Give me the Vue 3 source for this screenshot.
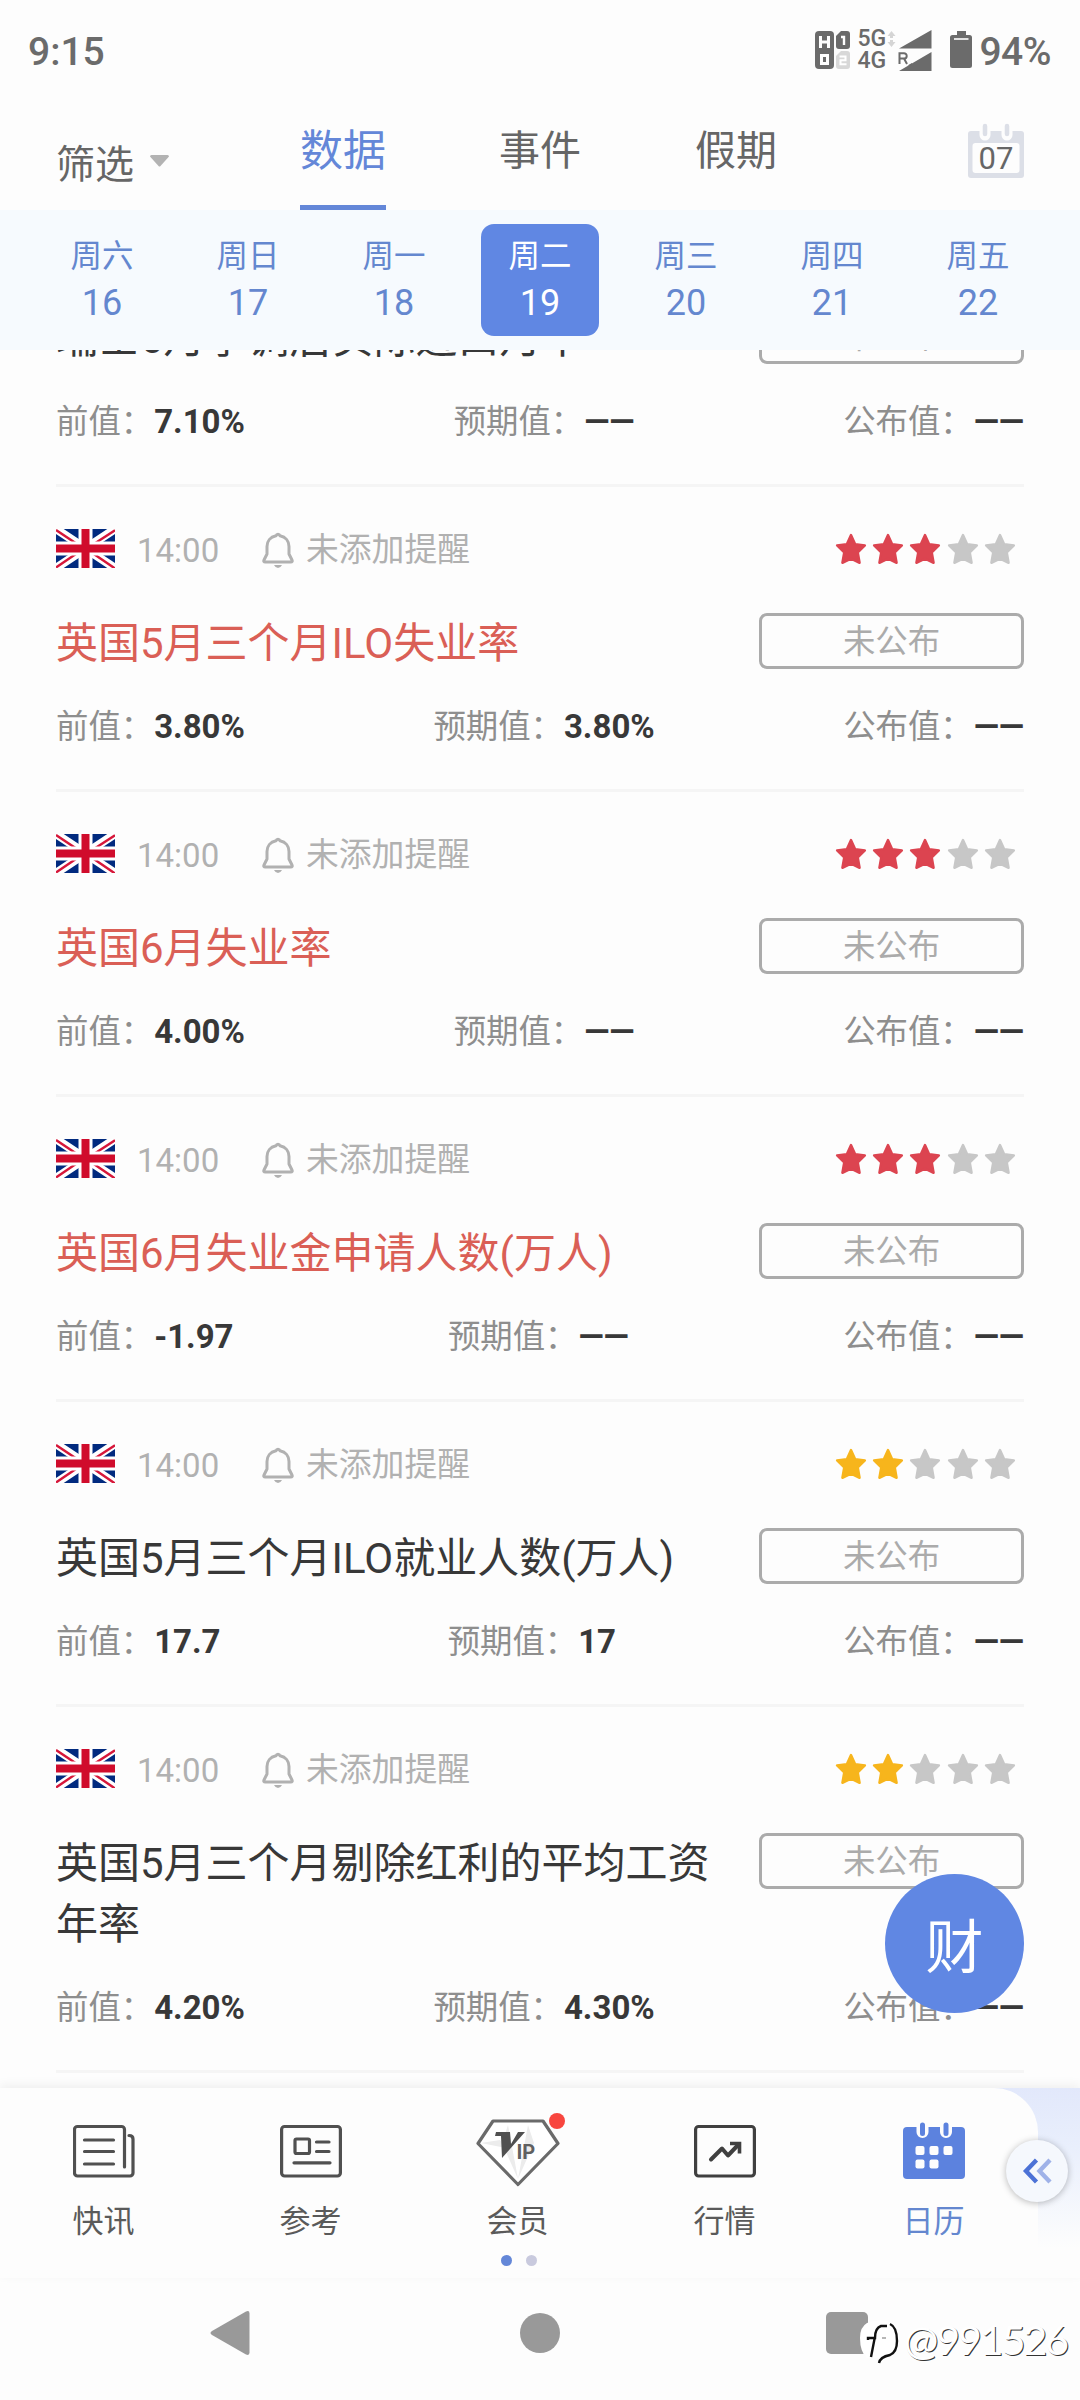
<script setup>
const tabs = ['数据', '事件', '假期']

const days = [
  { name: '周六', date: 16 },
  { name: '周日', date: 17 },
  { name: '周一', date: 18 },
  { name: '周二', date: 19, active: true },
  { name: '周三', date: 20 },
  { name: '周四', date: 21 },
  { name: '周五', date: 22 },
]

const EMPTY = '——'

const items = [
  { title: '瑞士6月季调后实际进口月率', stars: 2, prev: '7.10%', forecast: EMPTY, actual: EMPTY },
  { title: '英国5月三个月ILO失业率', stars: 3, prev: '3.80%', forecast: '3.80%', actual: EMPTY },
  { title: '英国6月失业率', stars: 3, prev: '4.00%', forecast: EMPTY, actual: EMPTY },
  { title: '英国6月失业金申请人数(万人)', stars: 3, prev: '-1.97', forecast: EMPTY, actual: EMPTY },
  { title: '英国5月三个月ILO就业人数(万人)', stars: 2, prev: '17.7', forecast: '17', actual: EMPTY },
  { title: '英国5月三个月剔除红利的平均工资年率', stars: 2, prev: '4.20%', forecast: '4.30%', actual: EMPTY },
]
</script>

<template>
  <div class="screen">
    <header class="status">
      <span class="clock">9:15</span>
      <div class="indicators">
        <svg class="sim" width="36" height="38" viewBox="0 0 36 38">
          <rect x="0" y="0" width="19" height="38" rx="4" fill="#6b6b6b" />
          <path d="M5.500 5v12M13.500 5v12M5.500 11h8" stroke="#fff" stroke-width="3" fill="none" />
          <path d="M6.500 24.500h6v8h-6z" stroke="#fff" stroke-width="3" fill="none" />
          <path d="M26 0h6a3 3 0 0 1 3 3v12a3 3 0 0 1-3 3h-8a3 3 0 0 1-3-3V5z" fill="#6b6b6b" />
          <path d="M26 6h3v8" stroke="#fff" stroke-width="2.400" fill="none" />
          <path d="M26 20h6a3 3 0 0 1 3 3v12a3 3 0 0 1-3 3h-8a3 3 0 0 1-3-3V25z" fill="#d8d8d8" />
          <path d="M24.500 25.500h6v3.700h-5v4h6" stroke="#fff" stroke-width="2" fill="none" />
        </svg>
        <div class="nets"><span>5G</span><span>4G</span></div>
        <svg class="signal" width="45" height="42" viewBox="0 0 45 42">
          <path d="M4.500 2l4 5h-2.500v2h-3V7H.5zM4.500 18l4-5h-2.500v-2h-3v2H.5z" fill="#d5d5d5" />
          <path d="M12 19.500L44.500 1v18.500zM12 42L44.500 23v19z" fill="#6b6b6b" />
          <rect x="10" y="22.500" width="12" height="13" fill="#fdfdfd" />
          <path d="M12.500 35V24.200h4.500a2.600 2.600 0 0 1 0 5.400h-4.500M17 29.600l3 5.400" fill="none" stroke="#6b6b6b" stroke-width="2" />
          <path d="M20.500 36.500L25 34v2.500z" fill="#6b6b6b" />
        </svg>
        <svg class="battery" width="22" height="37" viewBox="0 0 22 37">
          <path d="M7 0h9v4h3.500A2.500 2.500 0 0 1 22 6.500v28a2.500 2.500 0 0 1-2.500 2.500h-17A2.500 2.500 0 0 1 0 34.500v-28A2.500 2.500 0 0 1 2.500 4H7z" fill="#6b6b6b" />
          <path d="M4 8h14.500" stroke="#fff" stroke-width="1.600" />
        </svg>
        <span class="level">94%</span>
      </div>
    </header>

    <nav class="top">
      <div class="filter">
        <span>筛选</span>
        <svg width="19" height="12" viewBox="0 0 19 12"><path d="M0 1.500Q0 0 1.500 0h16Q19 0 19 1.500L10.500 11q-1 1-2 0z" fill="#b3b3b3" /></svg>
      </div>
      <div class="tabs">
        <span v-for="(t, i) in tabs" :key="t" class="tab" :class="{ on: i === 0 }">{{ t }}</span>
      </div>
      <div class="today">
        <svg width="56" height="55" viewBox="0 0 56 55">
          <path d="M3 8h50a3 3 0 0 1 3 3v41a3 3 0 0 1-3 3H3a3 3 0 0 1-3-3V11a3 3 0 0 1 3-3z" fill="#dcdfe7" />
          <rect x="4.500" y="20" width="47" height="30" rx="3" fill="#fdfdfd" />
          <path d="M17 6v6M39 6v6" stroke="#fdfdfd" stroke-width="11" stroke-linecap="round" />
          <path d="M17 3v8M39 3v8" stroke="#dcdfe7" stroke-width="4.500" stroke-linecap="round" />
        </svg>
        <span>07</span>
      </div>
    </nav>

    <section class="week">
      <div v-for="d in days" :key="d.date" class="day" :class="{ active: d.active }">
        <span class="name">{{ d.name }}</span>
        <span class="date">{{ d.date }}</span>
      </div>
    </section>

    <main class="list">
      <article v-for="it in items" :key="it.title" class="item">
        <div class="head">
          <svg class="flag" width="59" height="39" viewBox="0 0 59 39">
            <rect width="59" height="39" fill="#012a7f" />
            <path d="M0 0L59 39M59 0L0 39" stroke="#fff" stroke-width="8.500" />
            <path d="M0 1L27 19M32 21L59 39.500M59 1.200L34 17.500M25 21.500L0 38.500" stroke="#d6173a" stroke-width="2.400" />
            <path d="M29.500 0v39M0 19.500h59" stroke="#fff" stroke-width="14" />
            <path d="M29.500 0v39M0 19.500h59" stroke="#d00c2c" stroke-width="8" />
          </svg>
          <span class="time">14:00</span>
          <svg class="bell" width="32" height="36" viewBox="0 0 32 36" fill="none" stroke="#b1b1b1" stroke-width="3">
            <path d="M16 2.200c-1.200 0-1.700.7-2 1.600C8.200 5 5 9.300 5 14.500V22L2 28q-.8 2 1.200 2h25.600q2 0 1.200-2L27 22v-7.500C27 9.300 23.800 5 18 3.800c-.3-.9-.8-1.600-2-1.600z" stroke-linejoin="round" />
            <path d="M12 33h8q-1.500 3-4 3t-4-3z" fill="#b1b1b1" stroke="none" />
          </svg>
          <span class="remind">未添加提醒</span>
          <div class="stars">
            <svg v-for="n in 5" :key="n" width="32" height="32" viewBox="0 0 32 32">
              <path
                d="M16 2L20.200 11.200L29.900 12.400L22.800 19.400L24.600 29.800L16 25.600L7.400 29.800L9.200 19.400L2.100 12.400L11.800 11.200Z"
                :class="n > it.stars ? 's-off' : it.stars > 2 ? 's-red' : 's-gold'"
                stroke-width="2.400" stroke-linejoin="round"
              />
            </svg>
          </div>
        </div>
        <div class="main-row">
          <h3 :class="{ hot: it.stars > 2 }">{{ it.title }}</h3>
          <span class="badge">未公布</span>
        </div>
        <div class="values">
          <span>前值：<b>{{ it.prev }}</b></span>
          <span>预期值：<b>{{ it.forecast }}</b></span>
          <span>公布值：<b>{{ it.actual }}</b></span>
        </div>
      </article>
    </main>

    <button class="fab">财</button>

    <footer class="bottom">
      <div class="bar">
        <div class="entry">
          <svg width="62" height="70" viewBox="0 0 62 70" fill="none" stroke="#505050" stroke-width="3.200" stroke-linecap="round">
            <path d="M51.500 50V12.500a3 3 0 0 0-3-3H4.500a3 3 0 0 0-3 3V56a3 3 0 0 0 3 3H57a3 3 0 0 0 3-3V22q0-3.500-4-3.500" />
            <path d="M11.500 23h29M11.500 34.500h29M11.500 47h29" />
          </svg>
          <span>快讯</span>
        </div>
        <div class="entry">
          <svg width="62" height="70" viewBox="0 0 62 70" fill="none" stroke="#505050" stroke-width="3.200" stroke-linecap="round">
            <rect x="1.600" y="9.500" width="58.800" height="49.500" rx="3" />
            <rect x="15" y="22" width="14.500" height="14.500" rx="1.500" />
            <path d="M36.500 25h12.500M36.500 34.500h12.500M14 45.800h36" />
          </svg>
          <span>参考</span>
        </div>
        <div class="entry">
          <svg class="vip" width="84" height="70" viewBox="0 0 84 70">
            <path d="M17 4h50L82 26.500L42 67.500L2 26.500z" fill="#fff" />
            <path d="M26 26L32 8L42 62zM58 26L52 8L42 62zM5 26L24 23L30 31z" fill="#ececec" />
            <path d="M17 4h50L82 26.500L42 67.500L2 26.500z" fill="none" stroke="#6a6a6a" stroke-width="3.200" stroke-linejoin="round" />
            <path d="M20 15h14l1 12L42 15h7L26 41L25 19h-6z" fill="#505050" />
            <text x="40.500" y="42" class="ip">IP</text>
          </svg>
          <i class="dot" />
          <span>会员</span>
        </div>
        <div class="entry">
          <svg width="62" height="70" viewBox="0 0 62 70" fill="none" stroke="#404040">
            <rect x="1.600" y="9.500" width="58.800" height="49.500" rx="3" stroke-width="3.200" />
            <path d="M17 42.500L28 31.500L34 38.500L45 27" stroke-width="4" stroke-linecap="round" stroke-linejoin="round" />
            <path d="M36 26.500h9.500v10" stroke-width="3.600" />
          </svg>
          <span>行情</span>
        </div>
        <div class="entry current">
          <svg width="62" height="70" viewBox="0 0 62 70">
            <rect x="0" y="10" width="62" height="52" rx="4" fill="#5c82de" />
            <path d="M19.500 8v7M43 8v7" stroke="#fdfdfd" stroke-width="12" stroke-linecap="round" />
            <path d="M19.500 8v8.500M43 8v8.500" stroke="#5c82de" stroke-width="5" stroke-linecap="round" />
            <g fill="#fdfdfd">
              <rect x="12.500" y="29" width="9" height="9" rx="2" /><rect x="26.500" y="29" width="9" height="9" rx="2" /><rect x="40.500" y="29" width="9" height="9" rx="2" />
              <rect x="12.500" y="42.500" width="9" height="9" rx="2" /><rect x="26.500" y="42.500" width="9" height="9" rx="2" />
            </g>
          </svg>
          <span>日历</span>
        </div>
      </div>
      <div class="expand">
        <svg width="30" height="26" viewBox="0 0 30 26" fill="none" stroke-width="4.400">
          <path d="M14.500 2L4 13l10.500 11" stroke="#4c72d6" />
          <path d="M28 2L17.500 13L28 24" stroke="#9fb2e8" />
        </svg>
      </div>
      <div class="pager"><i /><i /></div>
    </footer>

    <div class="system">
      <svg width="40" height="46" viewBox="0 0 40 46"><path d="M36 1.500L2 21q-3 2 0 4L36 44.500q3.500 1.500 3.500-2V3.500Q39.500 0 36 1.500z" fill="#999" /></svg>
      <i class="home" />
      <i class="recent" />
    </div>

    <div class="watermark">
      <svg width="42" height="48" viewBox="0 0 42 48">
        <path d="M8 5Q18 1 28 3Q40 6 40 22Q40 33 32 38L21 45L22 40H8Q1 34 1 20Q1 9 8 5z" fill="#fff" />
        <path d="M31 6q7 3 7 17q0 11-7 14q-10 2-11 8" fill="none" stroke="#111" stroke-width="2.400" />
        <path d="M12 39l3.500-18M9 22V20h7q0-10 6-12h6" fill="none" stroke="#111" stroke-width="2.400" />
        <path d="M23 20h4" stroke="#999" stroke-width="1.400" />
      </svg>
      <span>@991526</span>
    </div>
  </div>
</template>

<style>
body {
  margin: 0;
  background: #fdfdfd;
}
</style>

<style scoped>
.screen {
  position: relative;
  width: 1080px;
  height: 2400px;
  overflow: hidden;
  display: flex;
  flex-direction: column;
  background: #fdfdfd;
  font-family: Roboto, 'Noto Sans CJK SC', sans-serif;
  color: #666;
}
.status {
  height: 102px;
  box-sizing: border-box;
  padding: 0 29px 0 28px;
  display: flex;
  justify-content: space-between;
  align-items: center;
  color: #6b6b6b;
  font-size: 39px;
}
.clock { font-weight: 500; margin-top: 2px; }
.indicators { display: flex; align-items: center; height: 42px; margin-top: -3px; }
.nets {
  display: flex;
  flex-direction: column;
  width: 30px;
  margin-left: 6px;
  font-size: 23px;
  line-height: 22px;
  font-weight: 500;
}
.battery { margin-left: 18px; }
.level { margin-left: 7px; margin-top: 5px; font-weight: 500; letter-spacing: -0.500px; }
.top {
  height: 108px;
  display: flex;
  position: relative;
  box-sizing: border-box;
  padding: 0 56px;
}
.filter {
  display: flex;
  align-items: center;
  gap: 16px;
  font-size: 39px;
  width: 244px;
  height: 60px;
  margin-top: 29px;
}
.tabs { display: flex; align-items: flex-start; }
.tab {
  font-size: 41px;
  line-height: 60px;
  margin-top: 19px;
  width: 196px;
  height: 89px;
}
.tab.on {
  width: 86px;
  font-size: 43px;
  line-height: 61px;
  color: #6487d8;
  border-bottom: 5px solid #6487d8;
  height: 84px;
  margin-right: 113px;
}
.today {
  position: relative;
  width: 56px;
  height: 55px;
  margin: 21px 0 0 auto;
}
.today svg { display: block; }
.today span {
  position: absolute;
  inset: 17px 0 0 0;
  text-align: center;
  font-size: 31px;
  line-height: 38px;
}
.week {
  height: 140px;
  flex: none;
  background: #f6fafe;
  display: flex;
  justify-content: space-between;
  align-items: center;
  padding: 0 43px;
}
.day {
  width: 118px;
  height: 112px;
  border-radius: 13px;
  display: flex;
  flex-direction: column;
  align-items: center;
  color: #6487cf;
}
.day.active { background: #6087e3; color: #fff; }
.name { font-size: 31.500px; line-height: 46px; margin-top: 10px; }
.date { font-size: 36px; line-height: 46px; }
.list {
  height: 1738px;
  flex: none;
  overflow: hidden;
}
.item {
  margin: 0 56px;
  padding: 42px 0 40px;
  border-bottom: 3px solid #f5f5f5;
}
.item:first-child { margin-top: -168px; }
.head {
  display: flex;
  align-items: center;
  height: 39px;
  color: #b1b1b1;
  font-size: 33px;
}
.time { margin-left: 22px; width: 122px; line-height: 39px; margin-top: 3px; }
.bell { margin-left: 3px; margin-top: 2px; }
.remind { margin-left: 12px; line-height: 39px; margin-top: 3px; font-size: 32.800px; }
.stars { display: flex; gap: 5.300px; margin: 0 8px 0 auto; }
.s-off { fill: #c7c7c7; stroke: #c7c7c7; }
.s-red { fill: #dc4450; stroke: #dc4450; }
.s-gold { fill: #f7b51c; stroke: #f7b51c; }
.main-row {
  display: flex;
  justify-content: space-between;
  align-items: flex-start;
  margin-top: 45px;
}
h3 {
  flex: 1;
  margin: 0 30px 0 0;
  font-size: 42px;
  line-height: 61px;
  font-weight: 400;
  color: #383838;
}
h3.hot { color: #da5f56; }
.badge {
  box-sizing: border-box;
  width: 265px;
  height: 56px;
  border: 3px solid #ababab;
  border-radius: 8px;
  text-align: center;
  font-size: 32.400px;
  line-height: 52px;
  color: #ababab;
}
.values {
  display: flex;
  justify-content: space-between;
  margin-top: 30px;
  height: 45px;
  line-height: 46px;
  font-size: 32.400px;
  color: #8e8e8e;
  white-space: nowrap;
}
.values b { color: #383838; font-weight: 700; margin-left: 1px; font-size: 33px; }
.fab {
  position: absolute;
  left: 885px;
  top: 1874px;
  width: 139px;
  height: 139px;
  padding: 0;
  border: 0;
  border-radius: 50%;
  background: #6087e3;
  color: #fff;
  font: 400 58px/139px 'Noto Sans CJK SC', sans-serif;
  text-align: center;
}
.bottom {
  position: relative;
  height: 190px;
  flex: none;
  background: linear-gradient(#e2e8fb, #e9effc 60px, #fdfdfd 160px);
  box-shadow: 0 -3px 10px rgba(0, 0, 0, 0.06);
}
.bar {
  box-sizing: border-box;
  display: flex;
  width: 1038px;
  height: 190px;
  padding-right: 3px;
  background: #fdfdfd;
  border-radius: 0 44px 0 0;
}
.entry {
  flex: 1;
  position: relative;
  display: flex;
  flex-direction: column;
  align-items: center;
  padding-top: 29px;
  font-size: 31px;
  line-height: 46px;
  color: #5a5a5a;
}
.entry svg { display: block; }
.entry span { margin-top: 12px; }
.entry.current { left: 2px; }
.entry.current span { color: #6487cf; }
.ip { font: 700 20px Roboto, sans-serif; fill: #606060; }
.dot {
  position: absolute;
  left: 135px;
  top: 25px;
  width: 16px;
  height: 16px;
  border-radius: 50%;
  background: #f8463f;
}
.expand {
  position: absolute;
  left: 1006px;
  top: 52px;
  width: 62px;
  height: 62px;
  border-radius: 50%;
  background: #f5f8fd;
  box-shadow: 0 1px 7px rgba(0, 0, 0, 0.28);
  display: flex;
  align-items: center;
  justify-content: center;
}
.pager {
  position: absolute;
  left: 501px;
  top: 167px;
  display: flex;
  gap: 14px;
}
.pager i { width: 11px; height: 11px; border-radius: 50%; background: #c9cade; }
.pager i:first-child { background: #6487d8; }
.system {
  flex: 1;
  display: flex;
  justify-content: space-between;
  align-items: center;
  padding: 0 212px 12px 210px;
}
.system svg { display: block; }
.home { width: 40px; height: 40px; border-radius: 50%; background: #999; margin-left: 59px; margin-right: 56px; }
.recent { width: 42px; height: 42px; border-radius: 5px; background: #999; }
.watermark {
  position: absolute;
  left: 859px;
  top: 2319px;
  display: flex;
  align-items: center;
  height: 46px;
  color: #fff;
}
.watermark span {
  font: 400 41px/46px Lato, sans-serif;
  letter-spacing: -2px;
  margin: -4px 0 0 3px;
  text-shadow: 1px 1px 0 #333;
}
</style>
